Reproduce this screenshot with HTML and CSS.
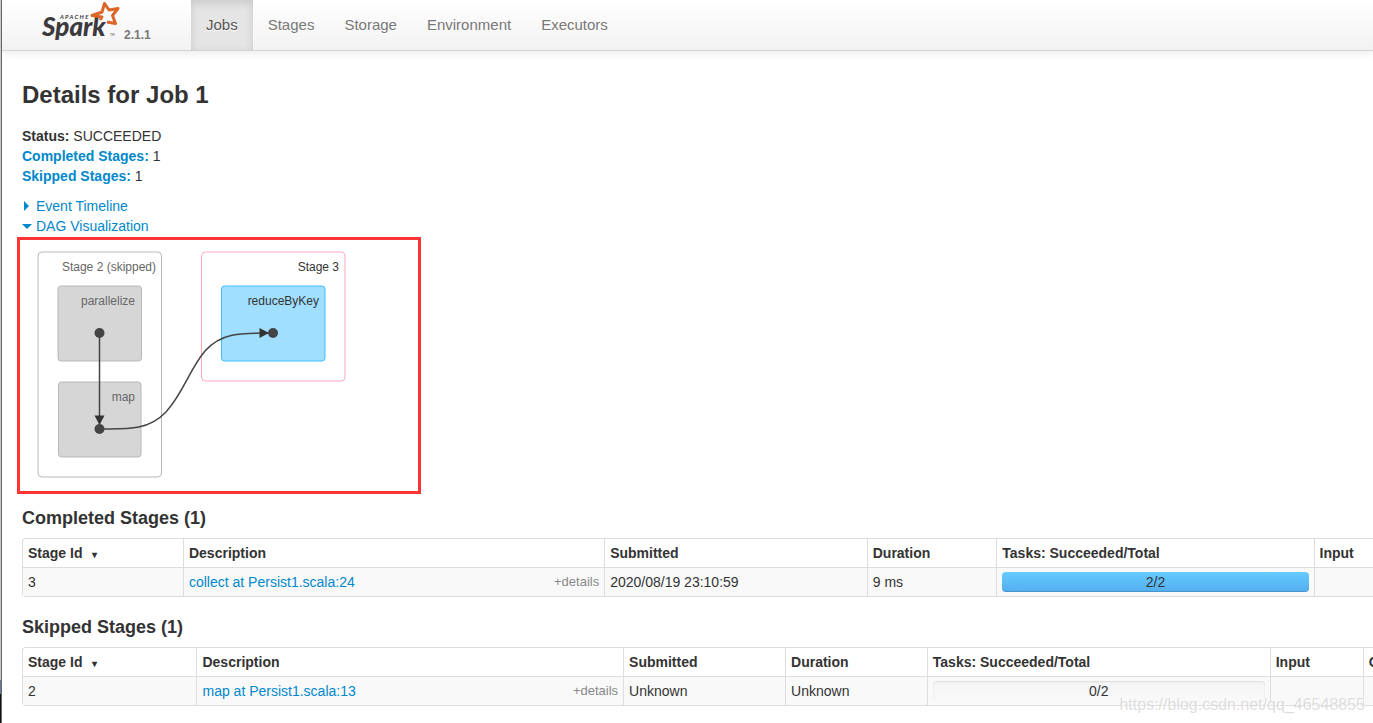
FILE: index.html
```html
<!DOCTYPE html>
<html lang="en">
<head>
<meta charset="utf-8">
<title>Details for Job 1</title>
<link rel="stylesheet" href="styles.css">
</head>
<body>
<div class="page">
  <header class="navbar">
    <a class="brand" href="#">
      <svg class="logo" width="80" height="46" viewBox="0 0 80 46" role="img" aria-label="Apache Spark">
        <text class="logo-small" x="18" y="19">A P A C H E</text>
        <text class="logo-word" x="0" y="36">Spark</text>
        <text class="logo-tm" x="68" y="36">TM</text>
        <path class="logo-star" d="M58 20 L60 17 L50 15.500 L60 12 L62.500 3.500 L67 10 L76 8.500 L70.500 15.500 L73.500 23.500 L65 22"/>
      </svg>
      <span class="version">2.1.1</span>
    </a>
    <nav class="nav">
      <a class="tab active" href="#">Jobs</a>
      <a class="tab" href="#">Stages</a>
      <a class="tab" href="#">Storage</a>
      <a class="tab" href="#">Environment</a>
      <a class="tab" href="#">Executors</a>
    </nav>
  </header>
  <main class="content">
    <h1 class="title">Details for Job 1</h1>
    <ul class="summary">
      <li><strong>Status:</strong> SUCCEEDED</li>
      <li><a href="#completed"><strong>Completed Stages:</strong></a> 1</li>
      <li><a href="#skipped"><strong>Skipped Stages:</strong></a> 1</li>
    </ul>
    <div class="toggles">
      <a class="toggle" href="#"><svg class="arrow" width="10" height="10" viewBox="0 0 10 10"><path d="M2 0 L7 5 L2 10 Z"/></svg>Event Timeline</a>
      <a class="toggle" href="#"><svg class="arrow" width="10" height="10" viewBox="0 0 10 10"><path d="M0 3 H10 L5 8 Z"/></svg>DAG Visualization</a>
    </div>
    <div class="dag">
      <svg width="398" height="251" viewBox="20 240 398 251">
        <rect class="stage skipped" x="38" y="252" width="123.500" height="225" rx="4"/>
        <rect class="stage current" x="201.500" y="252" width="143.500" height="129" rx="4"/>
        <rect class="op grey" x="58" y="286" width="83.500" height="75" rx="3"/>
        <rect class="op grey" x="58.500" y="382" width="82.500" height="75" rx="3"/>
        <rect class="op blue" x="221.500" y="286" width="103.500" height="75" rx="3"/>
        <text class="label faded" x="156" y="271">Stage 2 (skipped)</text>
        <text class="label" x="339" y="271">Stage 3</text>
        <text class="label faded" x="135" y="305">parallelize</text>
        <text class="label faded" x="135" y="401">map</text>
        <text class="label" x="319" y="305">reduceByKey</text>
        <path class="edge" d="M99.500 333 V424"/>
        <path class="edge" d="M99.500 429 C126 429 148 431 166 412 C184 392 189 370 205 351 C221 333 240 333 268 333"/>
        <path class="head" d="M94.500 415.500 H104.500 L99.500 425 Z M259.500 328 V338 L269 333 Z"/>
        <circle class="dot" cx="99.500" cy="333" r="5"/>
        <circle class="dot" cx="99.500" cy="429" r="5"/>
        <circle class="dot" cx="273" cy="333" r="5"/>
      </svg>
    </div>

    <h2 class="subtitle" id="completed">Completed Stages (1)</h2>
    <table class="stages completed">
      <colgroup><col class="c-id"><col class="c-desc"><col class="c-sub"><col class="c-dur"><col class="c-tasks"><col></colgroup>
      <thead><tr><th>Stage Id <span class="sort">▾</span></th><th>Description</th><th>Submitted</th><th>Duration</th><th>Tasks: Succeeded/Total</th><th>Input</th></tr></thead>
      <tbody><tr>
        <td>3</td>
        <td><div class="desc"><a href="#">collect at Persist1.scala:24</a><span class="details">+details</span></div></td>
        <td>2020/08/19 23:10:59</td><td>9 ms</td>
        <td class="bar-cell"><div class="progress full">2/2</div></td><td></td>
      </tr></tbody>
    </table>

    <h2 class="subtitle" id="skipped">Skipped Stages (1)</h2>
    <table class="stages pending">
      <colgroup><col class="c-id"><col class="c-desc"><col class="c-sub"><col class="c-dur"><col class="c-tasks"><col class="c-in"><col></colgroup>
      <thead><tr><th>Stage Id <span class="sort">▾</span></th><th>Description</th><th>Submitted</th><th>Duration</th><th>Tasks: Succeeded/Total</th><th>Input</th><th>Output</th></tr></thead>
      <tbody><tr>
        <td>2</td>
        <td><div class="desc"><a href="#">map at Persist1.scala:13</a><span class="details">+details</span></div></td>
        <td>Unknown</td><td>Unknown</td>
        <td class="bar-cell"><div class="progress">0/2</div></td><td></td><td></td>
      </tr></tbody>
    </table>
  </main>
  <div class="watermark">https://blog.csdn.net/qq_46548855</div>
</div>
</body>
</html>
```
FILE: styles.css
```css
* { box-sizing: border-box; }
body {
  margin: 0;
  padding-left: 1px;
  min-height: 100vh;
  background: linear-gradient(#c8c8c8 94%, #6b7a99 94%, #6b7a99 96%, #111 96%);
  font: 14px/20px "Liberation Sans", Arial, sans-serif;
  color: #333;
}
a { color: #0088cc; text-decoration: none; }
.page {
  position: relative;
  min-height: 100vh;
  overflow: hidden;
  background: #fff;
  border-left: 1px solid #666;
}
.navbar {
  display: flex;
  height: 51px;
  background: linear-gradient(#fff, #f2f2f2);
  border-bottom: 1px solid #d4d4d4;
  box-shadow: 0 1px 10px rgba(0, 0, 0, .1);
}
.brand { display: flex; width: 189px; padding-left: 40px; }
.logo { flex: none; }
.logo-word { font: italic 900 26px Lato, sans-serif; fill: #3c3a3e; }
.logo-small { font: italic bold 6px Lato, sans-serif; fill: #3c3a3e; }
.logo-tm { font: 3px Lato, sans-serif; fill: #3c3a3e; }
.logo-star { fill: none; stroke: #dc6628; stroke-width: 3; stroke-linejoin: round; }
.version { padding: 25px 0 0 2px; font-size: 12px; font-weight: bold; color: #777; }
.nav { display: flex; }
.tab {
  padding: 15px 15px 0;
  font-size: 15px;
  color: #777;
  text-shadow: 0 1px 0 #fff;
}
.active { color: #555; background: #e5e5e5; box-shadow: inset 0 3px 8px rgba(0, 0, 0, .125); }
.content { padding-left: 20px; }
.title { margin: 24px 0 11px; font-size: 24px; line-height: 40px; }
.summary { margin: 0 0 10px; padding: 0; list-style: none; }
.toggles { display: flex; flex-direction: column; align-items: flex-start; }
.toggle { display: flex; align-items: center; gap: 4px; }
.arrow { fill: #0088cc; }
.dag { width: 404px; margin: 1px 0 0 -5px; border: 3px solid #ff3535; }
.dag svg { display: block; }
.stage { fill: #fff; }
.skipped { stroke: #b8b8b8; }
.current { stroke: #ffa6bb; }
.grey { fill: #d6d6d6; stroke: #b8b8b8; }
.blue { fill: #a0dfff; stroke: #3ec0ff; }
.label { font-size: 12px; text-anchor: end; fill: #333; }
.faded { fill: #666; }
.edge { fill: none; stroke: #444; stroke-width: 1.5px; }
.head { fill: #333; }
.dot { fill: #444; }
.subtitle { margin: 4px 0 0; font-size: 18px; line-height: 40px; }
.stages {
  width: 100%;
  table-layout: fixed;
  border-collapse: separate;
  border-spacing: 0;
  border: 1px solid #ddd;
  border-width: 1px 0 1px 1px;
  border-radius: 4px 0 0 4px;
}
.stages + .subtitle { margin-top: 10px; }
th, td { height: 28px; padding: 4px 5px; text-align: left; white-space: nowrap; }
th + th, td + td { border-left: 1px solid #ddd; }
td { height: 29px; border-top: 1px solid #ddd; background: #f9f9f9; }
th:last-child { overflow: hidden; }
.completed .c-id { width: 11.85%; }
.completed .c-desc { width: 31.2%; }
.completed .c-sub { width: 19.45%; }
.completed .c-dur { width: 9.6%; }
.completed .c-tasks { width: 23.5%; }
.pending .c-id { width: 12.85%; }
.pending .c-desc { width: 31.6%; }
.pending .c-sub { width: 12%; }
.pending .c-dur { width: 10.5%; }
.pending .c-tasks { width: 25.4%; }
.pending .c-in { width: 6.9%; }
.sort { margin-left: 6px; font-size: 10px; line-height: 10px; }
.desc { display: flex; justify-content: space-between; }
.details { font-size: 13px; color: #888; }
.progress {
  height: 20px;
  border-radius: 4px;
  text-align: center;
  background: linear-gradient(#f5f5f5, #f9f9f9);
  box-shadow: inset 0 1px 2px rgba(0, 0, 0, .1);
}
.full { background: linear-gradient(#64cbff, #54aeee); box-shadow: inset 0 -1px 0 rgba(0, 0, 0, .15); }
.watermark {
  position: absolute;
  right: 8px;
  bottom: 8px;
  font-size: 16px;
  color: rgba(200, 200, 200, .6);
  text-shadow: 1px 1px 0 #fff;
}
```
